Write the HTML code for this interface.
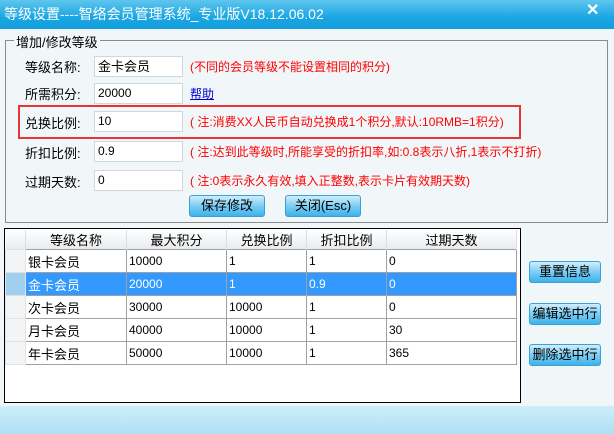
<!DOCTYPE html>
<html><head><meta charset="utf-8"><style>
*{box-sizing:border-box;margin:0;padding:0}
body{width:614px;height:434px;position:relative;overflow:hidden;background:#f1f6f8;font-family:"Liberation Sans","Noto Sans CJK SC",sans-serif;font-size:13px;color:#000}
.a{position:absolute}
.title{left:0;top:0;width:614px;height:29px;background:linear-gradient(#5fc6ee,#1aa6e3 60%,#139ddc);color:#fff;font-size:14px;line-height:28px;padding-left:4px}
.grp{left:5px;top:40px;width:603px;height:183px;border:1px solid #8a8a8a}
.leg{left:14px;top:32px;background:#f1f6f8;padding:0 2px;font-size:13px}
.lbl{left:25px;font-size:13px}
.inp{left:94px;width:89px;height:21px;background:#fff;border:1px solid #cfd8de;font-size:12px;padding:1px 3px;line-height:17px}
.red{left:190px;color:#f00;font-size:12px}
.btn{background:linear-gradient(#cfeefc,#7dcdf3 50%,#3cb2ea);border:1px solid #3aa0d8;border-radius:3px;text-align:center;font-size:13px;line-height:20px}
.grid{left:4px;top:228px;width:517px;height:175px;border:1px solid #000;background:#fff}
table{position:absolute;left:0;top:1px;border-collapse:collapse;font-size:12px}
td{border:1px solid #a0a0a0;height:23px;padding-left:2px}
th{font-weight:normal;height:19px;background:linear-gradient(#fff,#e8ecef);border-right:1px solid #ddd;font-size:13px}
tr.s td{background:#3399ff;color:#fff}
td.rh{background:#f2f4f6;border-color:#e2e2e2}
</style></head><body>
<div class="a title">等级设置----智络会员管理系统_专业版V18.12.06.02</div>
<div class="a" style="left:586px;top:0;color:#fff;font-size:16px;font-weight:bold">✕</div>
<div class="a grp"></div>
<div class="a leg">增加/修改等级</div>
<div class="a lbl" style="top:57px">等级名称:</div>
<div class="a inp" style="top:56px;font-size:13px">金卡会员</div>
<div class="a red" style="top:58px">(不同的会员等级不能设置相同的积分)</div>
<div class="a lbl" style="top:84px">所需积分:</div>
<div class="a inp" style="top:83px">20000</div>
<div class="a" style="left:190px;top:85px;color:#00c;text-decoration:underline;font-size:12px">帮助</div>
<div class="a" style="left:18px;top:105px;width:503px;height:34px;border:2px solid #e53535"></div>
<div class="a lbl" style="top:113px">兑换比例:</div>
<div class="a inp" style="top:111px">10</div>
<div class="a red" style="top:113px">( 注:消费XX人民币自动兑换成1个积分,默认:10RMB=1积分)</div>
<div class="a lbl" style="top:143px">折扣比例:</div>
<div class="a inp" style="top:141px">0.9</div>
<div class="a red" style="top:143px">( 注:达到此等级时,所能享受的折扣率,如:0.8表示八折,1表示不打折)</div>
<div class="a lbl" style="top:172px">过期天数:</div>
<div class="a inp" style="top:170px">0</div>
<div class="a red" style="top:172px">( 注:0表示永久有效,填入正整数,表示卡片有效期天数)</div>
<div class="a btn" style="left:189px;top:195px;width:76px;height:22px">保存修改</div>
<div class="a btn" style="left:285px;top:195px;width:76px;height:22px">关闭(Esc)</div>
<div class="a grid"><table>
<tr><th style="width:20px"></th><th style="width:101px">等级名称</th><th style="width:100px">最大积分</th><th style="width:80px">兑换比例</th><th style="width:80px">折扣比例</th><th style="width:130px">过期天数</th></tr>
<tr><td class="rh"></td><td style="font-size:13px">银卡会员</td><td>10000</td><td>1</td><td>1</td><td>0</td></tr>
<tr class="s"><td class="rh" style="background:#9fd0f0"></td><td style="font-size:13px">金卡会员</td><td>20000</td><td>1</td><td>0.9</td><td>0</td></tr>
<tr><td class="rh"></td><td style="font-size:13px">次卡会员</td><td>30000</td><td>10000</td><td>1</td><td>0</td></tr>
<tr><td class="rh"></td><td style="font-size:13px">月卡会员</td><td>40000</td><td>10000</td><td>1</td><td>30</td></tr>
<tr><td class="rh"></td><td style="font-size:13px">年卡会员</td><td>50000</td><td>10000</td><td>1</td><td>365</td></tr>
</table></div>
<div class="a btn" style="left:529px;top:261px;width:72px;height:22px">重置信息</div>
<div class="a btn" style="left:529px;top:303px;width:72px;height:22px">编辑选中行</div>
<div class="a btn" style="left:529px;top:344px;width:72px;height:22px">删除选中行</div>
<div class="a" style="left:0;top:406px;width:614px;height:28px;background:linear-gradient(#cdeefa,#aee0f4)"></div>
</body></html>
